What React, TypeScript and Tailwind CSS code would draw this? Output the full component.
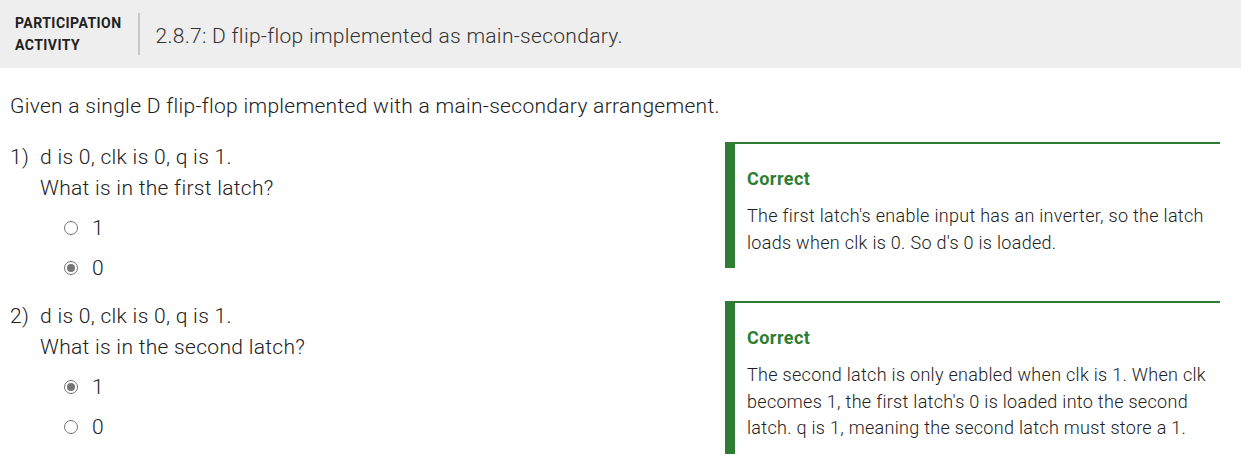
import React from "react";

function Radio({ checked, label }: { checked?: boolean; label: string }) {
  return (
    <div className="flex h-[40px] items-center">
      <div className="ml-[24px] flex h-[14px] w-[14px] items-center justify-center rounded-full border border-[#757575] bg-white">
        {checked && <div className="h-[8px] w-[8px] rounded-full bg-[#757575]" />}
      </div>
      <span className="ml-[14px] text-[21px] font-light tracking-[0.3px] text-[#212121]">{label}</span>
    </div>
  );
}

function Feedback({ lines }: { lines: string }) {
  return (
    <div className="mr-[11px] flex-1 border-l-[10px] border-t-2 border-[#2e7d32] pl-[12px] pr-[14px] pt-[23px] pb-[12px]">
      <div className="text-[18px] font-bold leading-[24px] tracking-[0.45px] text-[#2e7d32]">Correct</div>
      <p className="mt-[12px] text-[18px] font-light leading-[26.5px] tracking-[0.3px] text-[#212121]">{lines}</p>
    </div>
  );
}

function Question({
  num,
  line1,
  line2,
  opts,
  feedback,
}: {
  num: string;
  line1: string;
  line2: string;
  opts: { label: string; checked?: boolean }[];
  feedback: string;
}) {
  return (
    <div className="flex items-start">
      <div className="w-[715px] text-[21px] font-light leading-[31px] tracking-[0.3px] text-[#212121]">
        <div className="flex">
          <span className="w-[30px]">{num}</span>
          <div>
            <div>{line1}</div>
            <div>{line2}</div>
            <div className="mt-[4px]">
              {opts.map((o) => (
                <Radio key={o.label} label={o.label} checked={o.checked} />
              ))}
            </div>
          </div>
        </div>
      </div>
      <Feedback lines={feedback} />
    </div>
  );
}

export default function App() {
  return (
    <div className="min-h-[474px] w-[1241px] bg-white" style={{ fontFamily: "Roboto, 'Liberation Sans', sans-serif" }}>
      <div className="flex h-[68px] items-center bg-[#eeeeee]">
        <div className="pl-[15px] text-[14px] font-bold uppercase leading-[22px] tracking-[0.45px] text-[#212121]">
          <div>Participation</div>
          <div>Activity</div>
        </div>
        <div className="ml-[16px] h-[42px] w-[2px] bg-[#c8c8c8]" />
        <div className="ml-[16px] pt-[5px] text-[21px] font-light tracking-[0.3px] text-[#333333]">
          2.8.7: D flip-flop implemented as main-secondary.
        </div>
      </div>
      <div className="px-[10px]">
        <p className="mt-[24px] text-[21px] font-light leading-[28px] tracking-[0.3px] text-[#212121]">
          Given a single D flip-flop implemented with a main-secondary arrangement.
        </p>
        <div className="mt-[22px]">
          <Question
            num="1)"
            line1="d is 0, clk is 0, q is 1."
            line2="What is in the first latch?"
            opts={[{ label: "1" }, { label: "0", checked: true }]}
            feedback="The first latch's enable input has an inverter, so the latch loads when clk is 0. So d's 0 is loaded."
          />
        </div>
        <div className="mt-[13px]">
          <Question
            num="2)"
            line1="d is 0, clk is 0, q is 1."
            line2="What is in the second latch?"
            opts={[{ label: "1", checked: true }, { label: "0" }]}
            feedback="The second latch is only enabled when clk is 1. When clk becomes 1, the first latch's 0 is loaded into the second latch. q is 1, meaning the second latch must store a 1."
          />
        </div>
      </div>
    </div>
  );
}
